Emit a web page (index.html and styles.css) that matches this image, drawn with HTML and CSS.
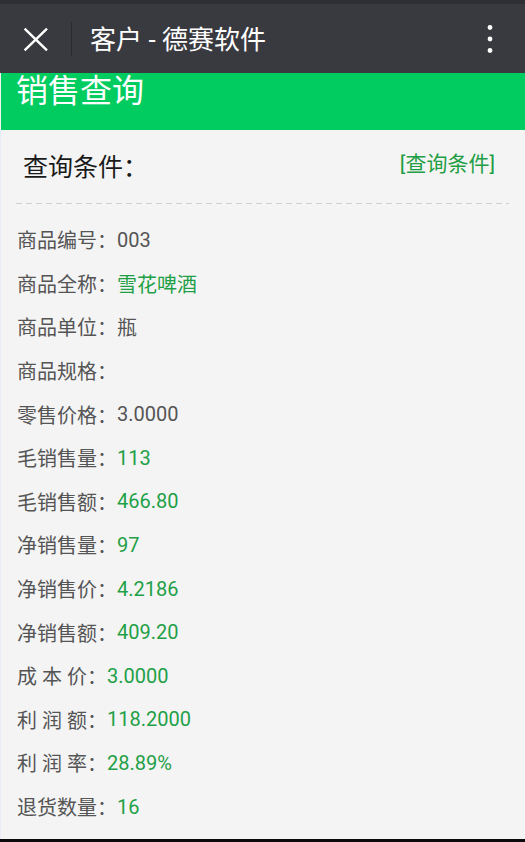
FILE: index.html
```html
<!DOCTYPE html>
<html lang="zh-CN">
<head>
<meta charset="utf-8">
<title>销售查询</title>
<link rel="stylesheet" href="styles.css">
</head>
<body>
<div class="page">
  <header class="topbar">
    <svg class="close" width="24" height="24" viewBox="0 0 24 24">
      <path d="M0.6 0.6 L23 22.4 M23 0.6 L0.6 22.4" stroke="#ffffff" stroke-width="2.4" fill="none"/>
    </svg>
    <span class="divider"></span>
    <span class="title">客户 - 德赛软件</span>
    <svg class="more" width="6" height="30" viewBox="0 0 6 30">
      <circle cx="3" cy="3.5" r="2.4" fill="#ffffff"/>
      <circle cx="3" cy="15" r="2.4" fill="#ffffff"/>
      <circle cx="3" cy="26.5" r="2.4" fill="#ffffff"/>
    </svg>
  </header>
  <div class="banner">销售查询</div>
  <main class="content">
    <div class="cond-head">
      <span class="cond-title">查询条件：</span>
      <span class="cond-link">[查询条件]</span>
    </div>
    <div class="dash"></div>
    <ul class="rows">
      <li class="row"><span class="label">商品编号：</span><span class="val">003</span></li>
      <li class="row"><span class="label">商品全称：</span><span class="val green">雪花啤酒</span></li>
      <li class="row"><span class="label">商品单位：</span><span class="val">瓶</span></li>
      <li class="row"><span class="label">商品规格：</span><span class="val"></span></li>
      <li class="row"><span class="label">零售价格：</span><span class="val">3.0000</span></li>
      <li class="row"><span class="label">毛销售量：</span><span class="val green">113</span></li>
      <li class="row"><span class="label">毛销售额：</span><span class="val green">466.80</span></li>
      <li class="row"><span class="label">净销售量：</span><span class="val green">97</span></li>
      <li class="row"><span class="label">净销售价：</span><span class="val green">4.2186</span></li>
      <li class="row"><span class="label">净销售额：</span><span class="val green">409.20</span></li>
      <li class="row"><span class="label">成 本 价：</span><span class="val green">3.0000</span></li>
      <li class="row"><span class="label">利 润 额：</span><span class="val green">118.2000</span></li>
      <li class="row"><span class="label">利 润 率：</span><span class="val green">28.89%</span></li>
      <li class="row"><span class="label">退货数量：</span><span class="val green">16</span></li>
    </ul>
  </main>
  <div class="bottom-bar"></div>
</div>
</body>
</html>
```
FILE: styles.css
```css
* { box-sizing: border-box; }
html, body {
  margin: 0;
  padding: 0;
  width: 525px;
  height: 842px;
  overflow: hidden;
  background: #f4f4f4;
  font-family: Roboto, "Noto Sans CJK SC", "Noto Sans", sans-serif;
}
.page {
  width: 525px;
  height: 842px;
  display: flex;
  flex-direction: column;
}
.topbar {
  height: 73px;
  border-top: 4px solid #2e2f33;
  background: #393a3f;
  display: flex;
  align-items: center;
  padding-left: 24px;
  padding-right: 32px;
  flex-shrink: 0;
}
.close { display: block; flex-shrink: 0; margin-top: 2px; }
.divider {
  width: 1px;
  height: 34px;
  background: #2a2b2f;
  margin-left: 23px;
}
.title {
  margin-left: 18px;
  margin-top: 3px;
  color: #ffffff;
  font-size: 26px;
  line-height: 30px;
}
.more { margin-left: auto; display: block; margin-top: 1px; }
.banner {
  height: 57px;
  background: #00cc60;
  color: #ffffff;
  font-size: 32px;
  line-height: 36px;
  padding-left: 15px;
  margin-left: 1px;
  flex-shrink: 0;
}
.content {
  flex: 1;
  border-left: 1px solid #e8edf5;
  background: #f4f4f4;
}
.cond-head {
  height: 73px;
  display: flex;
  justify-content: space-between;
  align-items: flex-start;
  padding-left: 22px;
  padding-right: 30px;
}
.cond-title {
  margin-top: 23px;
  font-size: 25px;
  line-height: 30px;
  color: #1a1a1a;
}
.cond-link {
  margin-top: 20px;
  font-size: 21px;
  line-height: 28px;
  color: #1f9e45;
}
.dash {
  height: 1px;
  margin-left: 15px;
  margin-right: 16px;
  background: repeating-linear-gradient(to right, #cfcfcf 0 6px, transparent 6px 10px);
}
.rows {
  list-style: none;
  margin: 0;
  padding: 14px 0 0 16px;
}
.row {
  height: 43.6px;
  display: flex;
  align-items: center;
  font-size: 20px;
  color: #555555;
}
.label { color: #555555; }
.val { color: #555555; }
.val.green { color: #1fa047; }
.bottom-bar {
  height: 3px;
  background: #0a0a0a;
  flex-shrink: 0;
}
```
